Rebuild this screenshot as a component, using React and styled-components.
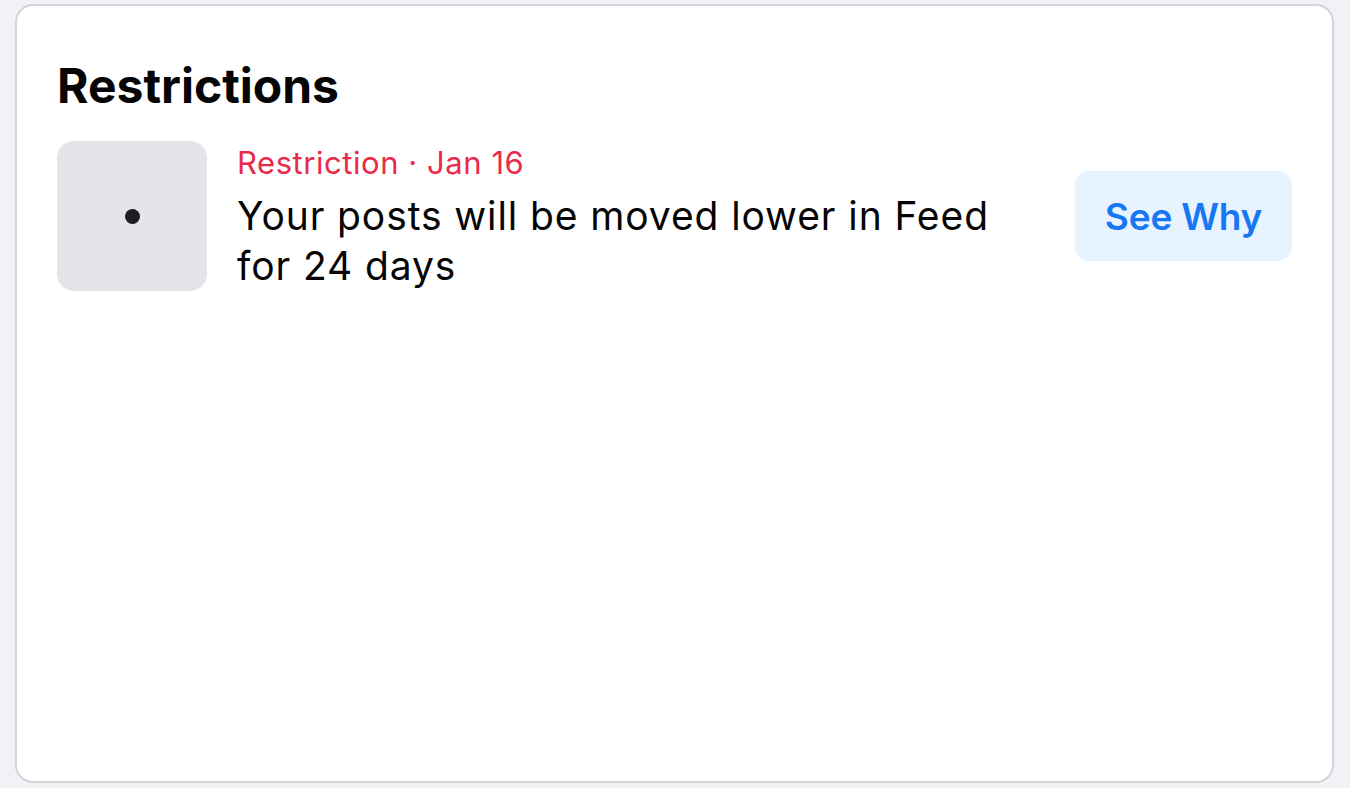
import styled, { createGlobalStyle } from 'styled-components';

const GlobalStyle = createGlobalStyle`
  html, body {
    margin: 0;
    padding: 0;
    background: #f0f2f5;
    font-family: Inter, "Noto Sans", "Liberation Sans", sans-serif;
    -webkit-font-smoothing: antialiased;
  }
`;

const Screen = styled.div`
  padding: 4px 16px 5px 15px;
  height: 788px;
  box-sizing: border-box;
`;

const Card = styled.section`
  height: 100%;
  box-sizing: border-box;
  background: #ffffff;
  border: 2px solid #d3d4d8;
  border-radius: 18px;
  padding: 50px 40px 0 40px;
`;

const Title = styled.h1`
  margin: 0 0 25px 0;
  font-size: 48px;
  font-weight: 700;
  line-height: 60px;
  color: #050505;
`;

const Row = styled.div`
  display: flex;
  align-items: center;
  gap: 30px;
`;

const Thumb = styled.div`
  flex: none;
  width: 150px;
  height: 150px;
  border-radius: 17px;
  background: #e4e5ea;
  display: flex;
  align-items: center;
  justify-content: center;
`;

const Dot = styled.span`
  width: 15px;
  height: 15px;
  border-radius: 50%;
  background: #1c1e21;
`;

const Body = styled.div`
  flex: 1;
  display: flex;
  flex-direction: column;
  align-self: flex-start;
  padding-top: 2px;
`;

const Meta = styled.div`
  font-size: 31px;
  line-height: 40px;
  color: #ea2a4a;
  letter-spacing: 0.55px;
`;

const Message = styled.div`
  margin-top: 8px;
  font-size: 39px;
  line-height: 50px;
  color: #050505;
  max-width: 790px;
  letter-spacing: 0.9px;
`;

const SeeWhy = styled.button`
  flex: none;
  width: 217px;
  height: 90px;
  border: none;
  border-radius: 15px;
  background: #e7f3ff;
  color: #1877f2;
  font-family: inherit;
  font-size: 37px;
  font-weight: 600;
  letter-spacing: -0.2px;
  cursor: pointer;
`;

export default function App() {
  return (
    <>
      <GlobalStyle />
      <Screen>
        <Card>
          <Title>Restrictions</Title>
          <Row>
            <Thumb>
              <Dot />
            </Thumb>
            <Body>
              <Meta>Restriction · Jan 16</Meta>
              <Message>Your posts will be moved lower in Feed for 24 days</Message>
            </Body>
            <SeeWhy>See Why</SeeWhy>
          </Row>
        </Card>
      </Screen>
    </>
  );
}
